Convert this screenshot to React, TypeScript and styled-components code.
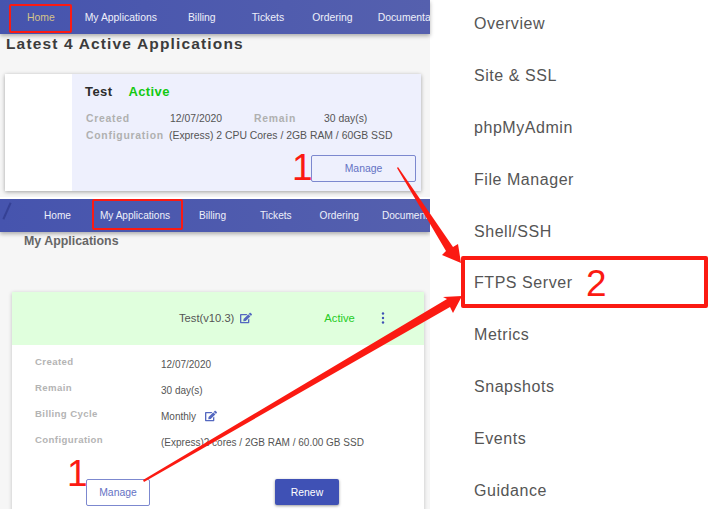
import styled, { createGlobalStyle } from 'styled-components';
import { FaEdit } from 'react-icons/fa';

const GlobalStyle = createGlobalStyle`
  html, body {
    margin: 0;
    padding: 0;
    background: #fff;
    font-family: "Liberation Sans", Arial, sans-serif;
  }
`;

const Shot = styled.div`
  position: relative;
  display: flex;
  width: 708px;
  height: 509px;
  overflow: hidden;
  background: #fff;
`;

const LeftColumn = styled.div`
  display: flex;
  flex-direction: column;
  width: 430px;
  flex-shrink: 0;
  background: #fff;
`;

const HomePanel = styled.section`
  height: 197px;
  background: #f6f6f6;
  margin-bottom: 2px;
`;

const AppsPanel = styled.section`
  flex: 1;
  background: #f6f6f6;
  overflow: hidden;
`;

const Nav = styled.nav<{ $height: number; $size: number; $slash?: boolean }>`
  position: relative;
  display: flex;
  align-items: center;
  height: ${(p) => p.$height}px;
  background: linear-gradient(90deg, #4654ae 0%, #5560ae 100%);
  box-shadow: 0 2px 4px rgba(0, 0, 0, 0.3);
  font-size: ${(p) => p.$size}px;
  color: #eef0fa;
  white-space: nowrap;
  overflow: hidden;
  &::before {
    content: '';
    display: ${(p) => (p.$slash ? 'block' : 'none')};
    position: absolute;
    left: 6px;
    top: 3px;
    width: 2px;
    height: 18px;
    background: rgba(40, 50, 130, 0.55);
    transform: rotate(24deg);
  }
`;

const NavLink = styled.span<{ $left: number; $active?: boolean }>`
  margin-left: ${(p) => p.$left}px;
  color: ${(p) => (p.$active ? '#d5c489' : '#eef0fa')};
`;

const Heading = styled.h2`
  margin: 1px 0 0 6px;
  font-size: 15.5px;
  line-height: 17px;
  font-weight: 700;
  letter-spacing: 1.15px;
  color: #3c3c3c;
`;

const SummaryCard = styled.div`
  display: flex;
  height: 117px;
  width: 416px;
  margin: 22px 0 0 5px;
  background: #eef0fd;
  box-shadow: 0 1px 4px rgba(0, 0, 0, 0.35);
`;

const Thumb = styled.div`
  width: 67px;
  background: #fff;
`;

const SummaryBody = styled.div`
  flex: 1;
  display: flex;
  flex-direction: column;
  padding: 11px 5px 9px 13px;
`;

const TitleRow = styled.div`
  display: flex;
  gap: 16px;
  font-size: 13px;
  line-height: 14px;
  font-weight: 700;
  letter-spacing: 0.4px;
  color: #2c2c2c;
`;

const StatusBold = styled.span`
  color: #12c912;
`;

const SpecRow = styled.div<{ $top: number }>`
  display: flex;
  margin-top: ${(p) => p.$top}px;
  font-size: 10.4px;
  line-height: 12px;
  color: #555;
  white-space: nowrap;
`;

const SpecLabel = styled.span<{ $width: number }>`
  width: ${(p) => p.$width}px;
  font-weight: 700;
  letter-spacing: 0.75px;
  color: #b0b0b0;
  margin-left: 1px;
`;

const SpecValue = styled.span<{ $width?: number }>`
  width: ${(p) => (p.$width ? `${p.$width}px` : 'auto')};
`;

const ManageRow = styled.div`
  margin-top: auto;
  display: flex;
  justify-content: flex-end;
`;

const OutlineButton = styled.button<{ $width: number }>`
  width: ${(p) => p.$width}px;
  height: 27px;
  padding: 0;
  font-family: inherit;
  font-size: 10.4px;
  color: #6472c4;
  background: transparent;
  border: 1px solid #7c88cf;
  border-radius: 2px;
`;

const SubHeading = styled.h3`
  margin: 2px 0 0 24px;
  font-size: 12.4px;
  line-height: 15px;
  font-weight: 700;
  color: #666;
`;

const AppCard = styled.div`
  width: 412px;
  margin: 43px 0 0 12px;
  padding-bottom: 20px;
  background: #fff;
  box-shadow: 0 1px 4px rgba(0, 0, 0, 0.22);
`;

const CardHeader = styled.div`
  display: flex;
  align-items: center;
  height: 53px;
  padding: 0 0 1px 167px;
  box-sizing: border-box;
  background: #e0ffdd;
  font-size: 11.2px;
  color: #555;
`;

const EditIcon = styled(FaEdit)<{ $gap: number }>`
  color: #5468c0;
  font-size: 12px;
  margin-left: ${(p) => p.$gap}px;
`;

const StatusText = styled.span`
  margin-left: 72px;
  color: #25cc25;
`;

const DotsIcon = styled.svg`
  margin-left: 25px;
  width: 6px;
  height: 12px;
  fill: #3f51b5;
`;

const DetailGrid = styled.div`
  display: grid;
  grid-template-columns: 126px 1fr;
  grid-auto-rows: 26px;
  padding: 7px 0 0 23px;
`;

const DetailLabel = styled.span`
  font-size: 9.6px;
  line-height: 20px;
  font-weight: 700;
  letter-spacing: 0.4px;
  color: #b4b4b4;
`;

const DetailValue = styled.span`
  display: flex;
  align-items: center;
  height: 24px;
  font-size: 10px;
  color: #555;
  white-space: nowrap;
`;

const ButtonRow = styled.div`
  display: flex;
  gap: 125px;
  padding: 23px 0 0 74px;
`;

const RenewButton = styled.button`
  width: 64px;
  height: 26px;
  padding: 0;
  font-family: inherit;
  font-size: 10.4px;
  color: #fff;
  background: #3f51b5;
  border: none;
  border-radius: 2px;
  box-shadow: 0 1px 3px rgba(0, 0, 0, 0.4);
`;

const SideMenu = styled.ul`
  flex: 1;
  list-style: none;
  margin: 0;
  padding: 0 0 0 44px;
  background: #fff;
`;

const MenuItem = styled.li`
  height: 51.9px;
  display: flex;
  align-items: center;
  font-size: 16px;
  letter-spacing: 0.55px;
  color: #555;
  &:first-child {
    margin-top: -2px;
  }
`;

const RedBox = styled.div<{ $x: number; $y: number; $w: number; $h: number; $border: number }>`
  position: absolute;
  left: ${(p) => p.$x}px;
  top: ${(p) => p.$y}px;
  width: ${(p) => p.$w}px;
  height: ${(p) => p.$h}px;
  box-sizing: border-box;
  border: ${(p) => p.$border}px solid #fb1a12;
  border-radius: 2px;
`;

const StepNumber = styled.span<{ $x: number; $y: number }>`
  position: absolute;
  left: ${(p) => p.$x}px;
  top: ${(p) => p.$y}px;
  font-size: 37px;
  line-height: 40px;
  color: #fb1a12;
`;

const ArrowLayer = styled.svg`
  position: absolute;
  inset: 0;
  fill: #fb1a12;
  pointer-events: none;
`;

const menu = [
  'Overview',
  'Site & SSL',
  'phpMyAdmin',
  'File Manager',
  'Shell/SSH',
  'FTPS Server',
  'Metrics',
  'Snapshots',
  'Events',
  'Guidance',
];

export default function App() {
  return (
    <>
      <GlobalStyle />
      <Shot>
        <LeftColumn>
          <HomePanel>
            <Nav $height={34} $size={10.4}>
              <NavLink $left={27} $active>Home</NavLink>
              <NavLink $left={30}>My Applications</NavLink>
              <NavLink $left={31}>Billing</NavLink>
              <NavLink $left={36}>Tickets</NavLink>
              <NavLink $left={28}>Ordering</NavLink>
              <NavLink $left={25}>Documentation</NavLink>
            </Nav>
            <Heading>Latest 4 Active Applications</Heading>
            <SummaryCard>
              <Thumb />
              <SummaryBody>
                <TitleRow>
                  <span>Test</span>
                  <StatusBold>Active</StatusBold>
                </TitleRow>
                <SpecRow $top={14}>
                  <SpecLabel $width={84}>Created</SpecLabel>
                  <SpecValue $width={83}>12/07/2020</SpecValue>
                  <SpecLabel $width={70}>Remain</SpecLabel>
                  <SpecValue>30 day(s)</SpecValue>
                </SpecRow>
                <SpecRow $top={5}>
                  <SpecLabel $width={83}>Configuration</SpecLabel>
                  <SpecValue>(Express) 2 CPU Cores / 2GB RAM / 60GB SSD</SpecValue>
                </SpecRow>
                <ManageRow>
                  <OutlineButton $width={105}>Manage</OutlineButton>
                </ManageRow>
              </SummaryBody>
            </SummaryCard>
          </HomePanel>
          <AppsPanel>
            <Nav $height={33} $size={10.1} $slash>
              <NavLink $left={44}>Home</NavLink>
              <NavLink $left={29}>My Applications</NavLink>
              <NavLink $left={29}>Billing</NavLink>
              <NavLink $left={34}>Tickets</NavLink>
              <NavLink $left={28}>Ordering</NavLink>
              <NavLink $left={23}>Documentation</NavLink>
            </Nav>
            <SubHeading>My Applications</SubHeading>
            <AppCard>
              <CardHeader>
                Test(v10.3)
                <EditIcon $gap={6} />
                <StatusText>Active</StatusText>
                <DotsIcon viewBox="0 0 6 12">
                  <circle cx="3" cy="1.5" r="1.2" />
                  <circle cx="3" cy="6" r="1.2" />
                  <circle cx="3" cy="10.5" r="1.2" />
                </DotsIcon>
              </CardHeader>
              <DetailGrid>
                <DetailLabel>Created</DetailLabel>
                <DetailValue>12/07/2020</DetailValue>
                <DetailLabel>Remain</DetailLabel>
                <DetailValue>30 day(s)</DetailValue>
                <DetailLabel>Billing Cycle</DetailLabel>
                <DetailValue>
                  Monthly
                  <EditIcon $gap={9} />
                </DetailValue>
                <DetailLabel>Configuration</DetailLabel>
                <DetailValue>(Express)2 cores / 2GB RAM / 60.00 GB SSD</DetailValue>
              </DetailGrid>
              <ButtonRow>
                <OutlineButton $width={64}>Manage</OutlineButton>
                <RenewButton>Renew</RenewButton>
              </ButtonRow>
            </AppCard>
          </AppsPanel>
        </LeftColumn>
        <SideMenu>
          {menu.map((item) => (
            <MenuItem key={item}>{item}</MenuItem>
          ))}
        </SideMenu>

        <RedBox $x={9} $y={4} $w={63} $h={29} $border={2} />
        <RedBox $x={92} $y={199} $w={91} $h={31} $border={2} />
        <RedBox $x={461} $y={256} $w={247} $h={52} $border={4} />
        <ArrowLayer width="708" height="509" viewBox="0 0 708 509">
          <polygon points="397,168 398,167 453,247 458,244 461,263 442,255 446,251" />
          <polygon points="143,480 447,299 443,297 462,296 453,313 450,307 144,482" />
        </ArrowLayer>
        <StepNumber $x={292} $y={148}>1</StepNumber>
        <StepNumber $x={67} $y={454}>1</StepNumber>
        <StepNumber $x={586} $y={264}>2</StepNumber>
      </Shot>
    </>
  );
}
